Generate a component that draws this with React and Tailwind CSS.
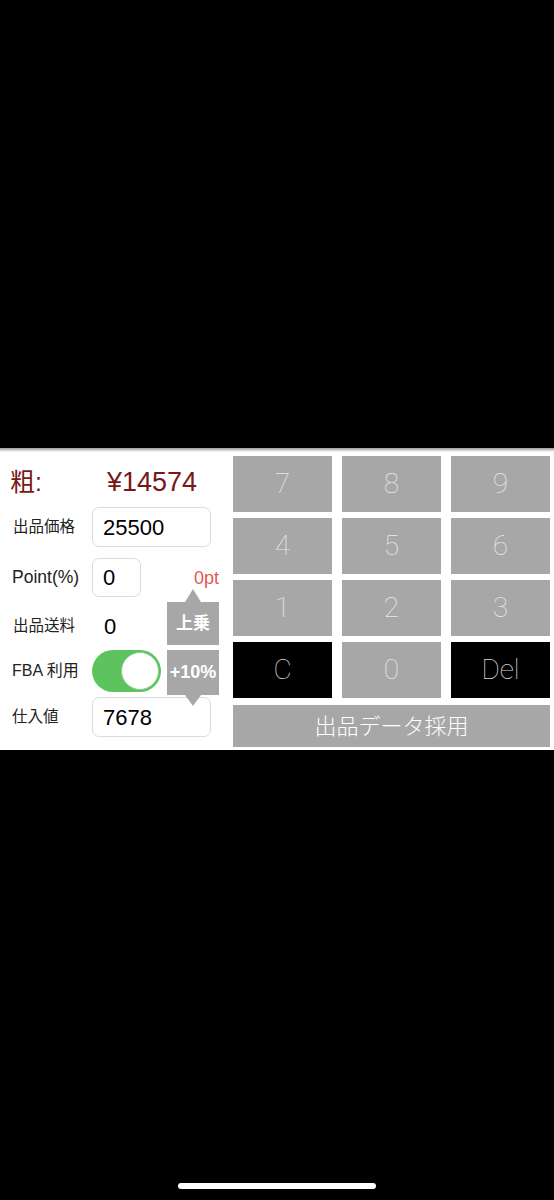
import React from "react";

const jp = { fontFamily: '"Liberation Sans", "Noto Sans CJK JP", sans-serif' };
const thin = { fontFamily: 'Roboto, "Noto Sans CJK JP", sans-serif' };

function Key({ label, dark }) {
  return (
    <div
      className={`h-[56px] flex items-center justify-center text-[28px] font-thin ${
        dark ? "bg-black text-[#d8d8d8]" : "bg-[#a7a7a7] text-[#e8e8e8]"
      }`}
      style={thin}
    >
      {label}
    </div>
  );
}

export default function App() {
  const keys = [
    ["7"], ["8"], ["9"],
    ["4"], ["5"], ["6"],
    ["1"], ["2"], ["3"],
    ["C", true], ["0"], ["Del", true],
  ];
  return (
    <div className="w-[554px] h-[1200px] bg-black flex flex-col" style={jp}>
      <div className="h-[448px]" />
      <div className="h-[302px] bg-white flex flex-col">
        <div className="h-[4px] bg-gradient-to-b from-[#9a9a9a] to-white" />
        <div className="flex flex-1">
          {/* Left column */}
          <div className="w-[225px] relative flex flex-col text-[#222]">
            <div className="h-[55px] pt-[6px] flex items-center text-[#7a1717]">
              <span className="pl-[10px] w-[107px] text-[25px]">粗:</span>
              <span className="text-[27px]">¥14574</span>
            </div>
            <div className="h-[40px] flex items-center">
              <span className="pl-[13px] w-[92px] text-[15.5px]">出品価格</span>
              <div className="w-[119px] h-[40px] rounded-[7px] border border-[#dcdcdc] flex items-center pl-[10px] text-[22px] text-black">
                25500
              </div>
            </div>
            <div className="mt-[11px] h-[39px] flex items-center">
              <span className="pl-[12px] w-[92px] text-[17.5px]">Point(%)</span>
              <div className="w-[49px] h-[39px] rounded-[7px] border border-[#dcdcdc] flex items-center pl-[10px] text-[22px] text-black">
                0
              </div>
              <span className="ml-auto mr-[6px] mt-[2px] text-[18px] text-[#e5564e]">0pt</span>
            </div>
            <div className="h-[53px] pt-[5px] flex items-center">
              <span className="pl-[13px] w-[92px] text-[15.5px]">出品送料</span>
              <span className="pl-[12px] text-[22px] text-black">0</span>
            </div>
            <div className="h-[42px] flex items-center">
              <span className="pl-[12px] w-[92px] text-[16px]">FBA 利用</span>
              <div className="w-[69px] h-[42px] rounded-full bg-[#5cc35f] flex items-center justify-end pr-[2px]">
                <div className="w-[38px] h-[38px] rounded-full bg-white border border-[#8fcf8f]" />
              </div>
            </div>
            <div className="mt-[5px] h-[40px] flex items-center">
              <span className="pl-[12px] w-[92px] text-[15.5px]">仕入値</span>
              <div className="w-[119px] h-[40px] rounded-[7px] border border-[#dcdcdc] flex items-center pl-[10px] text-[22px] text-black">
                7678
              </div>
            </div>

            {/* popup buttons */}
            <div className="absolute left-[167px] top-[137px] w-[52px] flex flex-col items-center">
              <div className="w-0 h-0 border-l-[8px] border-r-[8px] border-b-[13px] border-l-transparent border-r-transparent border-b-[#a7a7a7]" />
              <div className="w-[52px] h-[43px] bg-[#a7a7a7] flex items-center justify-center text-white text-[17px] font-bold">
                上乗
              </div>
              <div className="w-[52px] h-[45px] mt-[5px] bg-[#a7a7a7] flex items-center justify-center text-white text-[18px] font-bold">
                +10%
              </div>
              <div className="w-0 h-0 border-l-[8px] border-r-[8px] border-t-[11px] border-l-transparent border-r-transparent border-t-[#a7a7a7]" />
            </div>
          </div>

          {/* Keypad */}
          <div className="ml-[8px] w-[317px] pt-[4px] flex flex-col">
            <div className="grid grid-cols-3 gap-x-[10px] gap-y-[6px]">
              {keys.map(([k, d]) => (
                <Key key={k} label={k} dark={d} />
              ))}
            </div>
            <div className="mt-[7px] h-[42px] bg-[#a7a7a7] flex items-center justify-center text-white text-[22px] font-light">
              出品データ採用
            </div>
          </div>
        </div>
      </div>
      <div className="flex-1 flex flex-col justify-end items-center pb-[11px]">
        <div className="w-[198px] h-[6px] rounded-full bg-white" />
      </div>
    </div>
  );
}
